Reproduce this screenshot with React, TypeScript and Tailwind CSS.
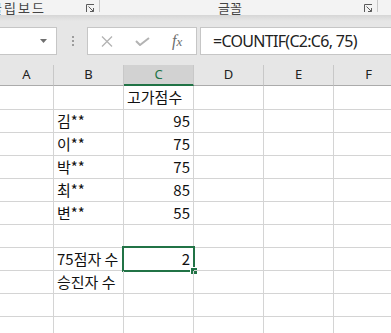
import React from "react";

const COLS = ["A", "B", "C", "D", "E", "F"];
const WIDTHS = ["w-[54px]", "w-[70px]", "w-[70px]", "w-[70px]", "w-[70px]", "w-[70px]"];

type Row = { b?: string; c?: string; cAlign?: "left" | "right"; selected?: boolean; h?: string };

const ROWS: Row[] = [
  { c: "고가점수", cAlign: "left", h: "h-[24px]" },
  { b: "김**", c: "95" },
  { b: "이**", c: "75" },
  { b: "박**", c: "75" },
  { b: "최**", c: "85" },
  { b: "변**", c: "55" },
  {},
  { b: "75점자 수", c: "2", selected: true },
  { b: "승진자 수" },
  {},
  {},
  {},
];

const font = "font-['Noto_Sans_CJK_KR','Noto_Sans',sans-serif]";

function Launcher() {
  return (
    <svg width="9" height="9" viewBox="0 0 9 9" fill="none" stroke="#5a5a5a" strokeWidth="1">
      <path d="M0.5 8V0.5H8" />
      <path d="M2.5 2.5L7.5 7.5" />
      <path d="M4 7.5H7.5V4" />
    </svg>
  );
}

function Ribbon() {
  return (
    <div className="flex h-[15px] items-start bg-[#f3f3f3] text-[13px] leading-[15px] text-[#444]">
      <div className="flex h-[12px] w-[100px] items-start border-r border-[#c8c8c8]">
        <span className="ml-[-10px] tracking-[2px]">클립보드</span>
        <span className="ml-auto mr-[4px] mt-[4px]"><Launcher /></span>
      </div>
      <div className="flex flex-1 items-start">
        <span className="ml-[118px]">글꼴</span>
      </div>
      <div className="flex h-[12px] w-[14px] items-start border-r border-[#c8c8c8]">
        <span className="mt-[4px]"><Launcher /></span>
      </div>
      <div className="w-[13px]" />
    </div>
  );
}

function FormulaBar() {
  return (
    <div className="h-[50px] bg-[#e6e6e6]">
      <div className="h-[6px] bg-gradient-to-b from-[#d6d6d6] to-[#e6e6e6]" />
      <div className="mt-[6px] flex h-[28px] items-stretch">
        <div className="ml-[-2px] flex w-[59px] items-center justify-end border border-[#c6c6c6] bg-white pr-[9px]">
          <svg width="7" height="4" viewBox="0 0 7 4"><path d="M0 0H7L3.5 4Z" fill="#6f6f6f" /></svg>
        </div>
        <div className="flex w-[30px] flex-col items-center justify-center gap-[2px] pl-[1px]">
          <span className="h-[2px] w-[2px] bg-[#9c9c9c]" />
          <span className="h-[2px] w-[2px] bg-[#9c9c9c]" />
          <span className="h-[2px] w-[2px] bg-[#9c9c9c]" />
        </div>
        <div className="flex w-[110px] items-center border border-[#c6c6c6] bg-white">
          <svg className="ml-[13px]" width="12" height="11" viewBox="0 0 12 11" fill="none" stroke="#b3b3b3" strokeWidth="1.3">
            <path d="M1 0.5L11 10.5M11 0.5L1 10.5" />
          </svg>
          <svg className="ml-[22px]" width="15" height="9" viewBox="0 0 15 9" fill="none" stroke="#b3b3b3" strokeWidth="2">
            <path d="M1 4L5 8L14 1" />
          </svg>
          <span className="ml-[22px] font-['Liberation_Serif',serif] text-[16px] italic text-[#6d6d6d]">
            f<span className="text-[13px]">x</span>
          </span>
        </div>
        <div className="ml-[3px] flex flex-1 items-center border border-r-0 border-[#c6c6c6] bg-white pl-[12px]">
          <span className="font-['Noto_Sans',sans-serif] text-[16px] tracking-[-0.7px] text-[#222]">=COUNTIF(C2:C6, 75)</span>
        </div>
      </div>
    </div>
  );
}

function Header() {
  return (
    <div className="flex">
      {COLS.map((c, i) => (
        <div
          key={c}
          className={`${WIDTHS[i]} flex h-[21px] shrink-0 items-center justify-center border-r border-[#c8c8c8] font-['Noto_Sans',sans-serif] text-[13px] ${
            c === "C"
              ? "border-b-2 border-b-[#217346] bg-[#d2d2d2] text-[#217346]"
              : "border-b border-b-[#ababab] bg-[#e6e6e6] text-[#222]"
          }`}
        >
          {c}
        </div>
      ))}
    </div>
  );
}

export default function App() {
  return (
    <div className={`h-[333px] w-[391px] overflow-hidden bg-white ${font}`}>
      <Ribbon />
      <FormulaBar />
      <Header />
      {ROWS.map((r, ri) => (
        <div key={ri} className="flex">
          {COLS.map((c, i) => {
            const text = c === "B" ? r.b : c === "C" ? r.c : undefined;
            const right = c === "C" && r.cAlign !== "left";
            return (
              <div
                key={c}
                className={`${WIDTHS[i]} ${r.h ?? "h-[23px]"} relative flex shrink-0 items-center border-r border-b border-[#d4d4d4] px-[3px] text-[15px] text-[#111] ${
                  right ? "justify-end" : "justify-start"
                }`}
              >
                <span className="whitespace-nowrap">{text}</span>
                {c === "C" && r.selected && (
                  <div className="absolute -top-[2px] -left-[2px] -right-[2px] -bottom-[2px] border-2 border-[#217346]">
                    <div className="absolute -right-[5px] -bottom-[5px] h-[8px] w-[8px] border border-white bg-[#217346]" />
                  </div>
                )}
              </div>
            );
          })}
        </div>
      ))}
    </div>
  );
}
